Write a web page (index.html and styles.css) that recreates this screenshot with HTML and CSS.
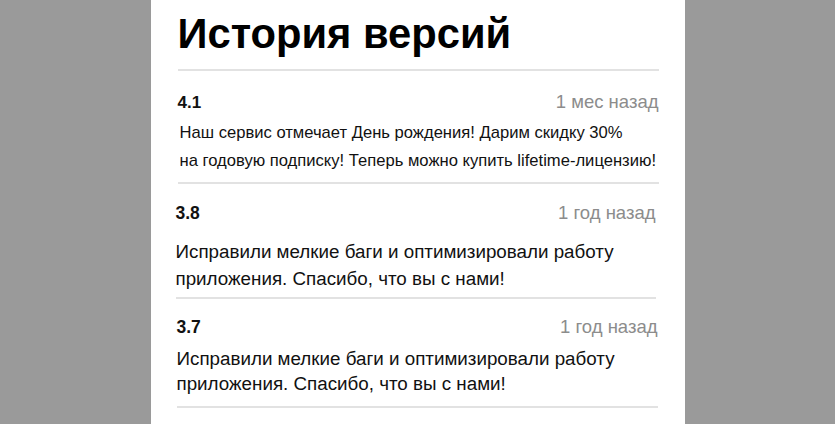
FILE: index.html
```html
<!DOCTYPE html>
<html lang="ru">
<head>
<meta charset="utf-8">
<title>История версий</title>
<link rel="stylesheet" href="styles.css">
</head>
<body>
<main class="panel">
  <h1 class="title">История версий</h1>
  <section class="entry entry-a">
    <div class="head">
      <span class="ver">4.1</span>
      <span class="date">1 мес назад</span>
    </div>
    <p class="text">Наш сервис отмечает День рождения! Дарим скидку 30%<br>на годовую подписку! Теперь можно купить lifetime-лицензию!</p>
  </section>
  <section class="entry entry-b">
    <div class="head">
      <span class="ver">3.8</span>
      <span class="date">1 год назад</span>
    </div>
    <p class="text">Исправили мелкие баги и оптимизировали работу<br>приложения. Спасибо, что вы с нами!</p>
  </section>
  <section class="entry entry-c">
    <div class="head">
      <span class="ver">3.7</span>
      <span class="date">1 год назад</span>
    </div>
    <p class="text">Исправили мелкие баги и оптимизировали работу<br>приложения. Спасибо, что вы с нами!</p>
  </section>
</main>
</body>
</html>
```

FILE: styles.css
```css
html, body {
  margin: 0;
  padding: 0;
  height: 100%;
}
body {
  background: #9a9a9a;
  font-family: "Liberation Sans", Arial, sans-serif;
  color: #111;
  overflow: hidden;
}
.panel {
  width: 534px;
  height: 424px;
  margin: 0 auto;
  background: #fff;
  padding: 10px 26px 0 26px;
  box-sizing: border-box;
  display: flex;
  flex-direction: column;
}
.title {
  margin: 0 0 0 1px;
  font-size: 41.7px;
  line-height: 48px;
  font-weight: 700;
  color: #000;
  padding-bottom: 11px;
  border-bottom: 2px solid #e2e2e2;
}
.entry {
  border-bottom: 2px solid #e2e2e2;
}
.head {
  display: flex;
  justify-content: space-between;
  align-items: baseline;
}
.ver {
  font-size: 17px;
  font-weight: 700;
  color: #111;
}
.date {
  font-size: 18.5px;
  color: #8c8c8c;
}
.text {
  margin: 0;
}

.entry-a {
  margin-left: 1px;
  padding: 21px 0 7px 0;
}
.entry-a .head { line-height: 20px; }
.entry-a .text {
  margin-top: 6px;
  margin-left: 2px;
  font-size: 16.6px;
  line-height: 28px;
}

.entry-b {
  margin-right: 3px;
  margin-left: -1px;
  padding: 19px 0 5px 0;
}
.entry-b .head { line-height: 20px; }
.entry-b .ver { font-size: 17.5px; }
.entry-b .text {
  margin-top: 15px;
  font-size: 18.8px;
  line-height: 27px;
}

.entry-c {
  margin-right: 1px;
  padding: 21px 0 10px 0;
}
.entry-c .head { line-height: 14px; }
.entry-c .ver { font-size: 17.5px; }
.entry-c .text {
  margin-top: 12px;
  font-size: 18.8px;
  line-height: 25px;
}
```
